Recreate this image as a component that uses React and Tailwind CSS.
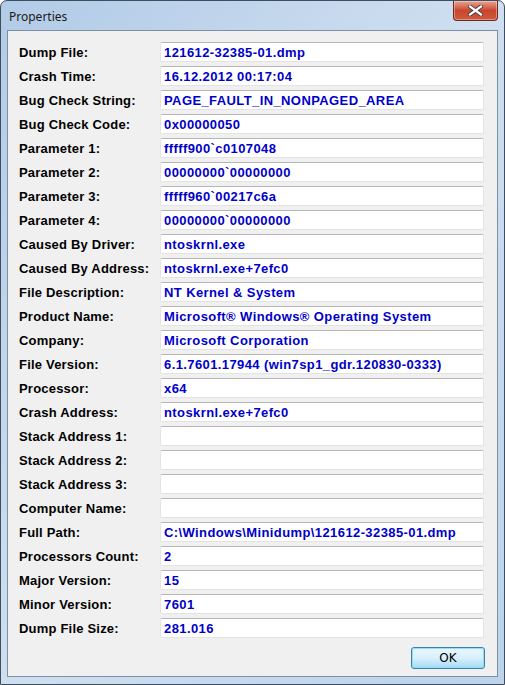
import React from "react";

const rows = [
  ["Dump File:", "121612-32385-01.dmp"],
  ["Crash Time:", "16.12.2012 00:17:04"],
  ["Bug Check String:", "PAGE_FAULT_IN_NONPAGED_AREA"],
  ["Bug Check Code:", "0x00000050"],
  ["Parameter 1:", "fffff900`c0107048"],
  ["Parameter 2:", "00000000`00000000"],
  ["Parameter 3:", "fffff960`00217c6a"],
  ["Parameter 4:", "00000000`00000000"],
  ["Caused By Driver:", "ntoskrnl.exe"],
  ["Caused By Address:", "ntoskrnl.exe+7efc0"],
  ["File Description:", "NT Kernel & System"],
  ["Product Name:", "Microsoft® Windows® Operating System"],
  ["Company:", "Microsoft Corporation"],
  ["File Version:", "6.1.7601.17944 (win7sp1_gdr.120830-0333)"],
  ["Processor:", "x64"],
  ["Crash Address:", "ntoskrnl.exe+7efc0"],
  ["Stack Address 1:", ""],
  ["Stack Address 2:", ""],
  ["Stack Address 3:", ""],
  ["Computer Name:", ""],
  ["Full Path:", "C:\\Windows\\Minidump\\121612-32385-01.dmp"],
  ["Processors Count:", "2"],
  ["Major Version:", "15"],
  ["Minor Version:", "7601"],
  ["Dump File Size:", "281.016"],
];

function Row({ label, value }) {
  return (
    <div className="flex items-center h-[20px]">
      <div className="w-[141px] shrink-0 text-[13px] font-bold text-black leading-none tracking-[0.2px]">{label}</div>
      <div className="w-[324px] h-[20px] bg-white border border-[#e3e3e3] border-t-[#b5b5b5] rounded-[2px] flex items-center pl-[3px] text-[13px] font-bold text-[#0000c8] leading-none tracking-[0.4px] whitespace-nowrap overflow-hidden">
        {value}
      </div>
    </div>
  );
}

export default function App() {
  return (
    <div
      className="w-[505px] h-[685px] flex flex-col border border-[#3f4e5e] rounded-t-[7px] bg-gradient-to-br from-[#b2cbe7] via-[#cfdff0] to-[#bcd3ea] overflow-hidden"
      style={{ fontFamily: '"Liberation Sans", Arial, sans-serif' }}
    >
      <div className="h-[29px] shrink-0 flex items-start justify-between pl-[8px]">
        <span className="mt-[7px] text-[12px] text-[#1a1a1a]" style={{ fontFamily: '"Noto Sans", sans-serif' }}>
          Properties
        </span>
        <div className="mr-[6px] w-[45px] h-[20px] rounded-b-[4px] border border-t-0 border-[#6d2a20] bg-gradient-to-b from-[#e8a393] via-[#c9462c] to-[#cf5a3c] flex items-center justify-center shadow-[inset_0_0_0_1px_rgba(255,255,255,0.35)]">
          <svg width="15" height="11" viewBox="0 0 15 11">
            <path d="M2 1.5 L13 9.5 M13 1.5 L2 9.5" stroke="#3a3a3a" strokeWidth="4" strokeLinecap="square" />
            <path d="M2 1.5 L13 9.5 M13 1.5 L2 9.5" stroke="#ffffff" strokeWidth="2.2" strokeLinecap="square" />
          </svg>
        </div>
      </div>
      <div className="mx-[6px] h-[647px] border border-[#7d8fa3] bg-[#f0f0f0] flex flex-col pt-[11px] pl-[11px]">
        <div className="flex flex-col gap-[4px]">
          {rows.map(([l, v]) => (
            <Row key={l} label={l} value={v} />
          ))}
        </div>
        <div className="flex justify-end pr-[12px] mt-[9px]">
          <button className="w-[74px] h-[22px] rounded-[3px] border border-[#3c7fb1] bg-gradient-to-b from-[#eaf6fd] via-[#d9f0fc] to-[#a7d9f5] shadow-[inset_0_0_0_1px_#8fe1fb] text-[12px] text-black" style={{ fontFamily: '"DejaVu Sans", sans-serif' }}>
            OK
          </button>
        </div>
      </div>
    </div>
  );
}
